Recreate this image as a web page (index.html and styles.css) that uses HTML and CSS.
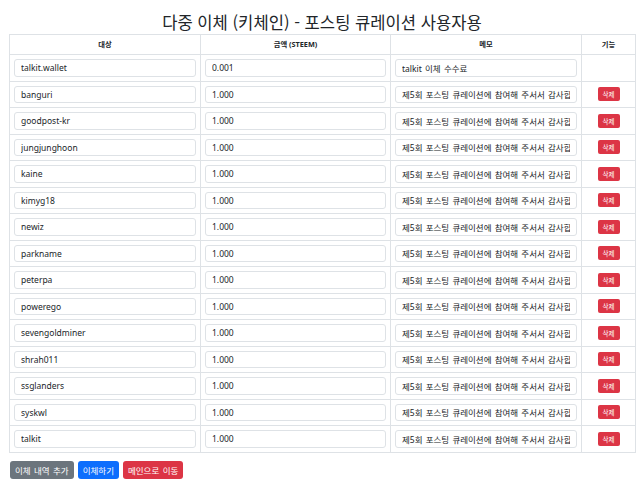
FILE: index.html
```html
<!DOCTYPE html>
<html lang="ko">
<head>
<meta charset="utf-8">
<title>다중 이체 (키체인) - 포스팅 큐레이션 사용자용</title>
<link rel="stylesheet" href="styles.css">
</head>
<body>
<div class="page">
  <h1 class="title">다중 이체 (키체인) - 포스팅 큐레이션 사용자용</h1>
  <table class="transfers">
    <colgroup>
      <col class="c-target"><col class="c-amount"><col class="c-memo"><col class="c-action">
    </colgroup>
    <thead>
      <tr><th>대상</th><th>금액 (STEEM)</th><th>메모</th><th>기능</th></tr>
    </thead>
    <tbody>
      <tr><td><input class="field" value="talkit.wallet"></td><td><input class="field" value="0.001"></td><td><input class="field" value="talkit 이체 수수료"></td><td></td></tr>
      <tr><td><input class="field" value="banguri"></td><td><input class="field" value="1.000"></td><td><input class="field" value="제5회 포스팅 큐레이션에 참여해 주서서 감사합니다"></td><td><button class="del">삭제</button></td></tr>
      <tr><td><input class="field" value="goodpost-kr"></td><td><input class="field" value="1.000"></td><td><input class="field" value="제5회 포스팅 큐레이션에 참여해 주서서 감사합니다"></td><td><button class="del">삭제</button></td></tr>
      <tr><td><input class="field" value="jungjunghoon"></td><td><input class="field" value="1.000"></td><td><input class="field" value="제5회 포스팅 큐레이션에 참여해 주서서 감사합니다"></td><td><button class="del">삭제</button></td></tr>
      <tr><td><input class="field" value="kaine"></td><td><input class="field" value="1.000"></td><td><input class="field" value="제5회 포스팅 큐레이션에 참여해 주서서 감사합니다"></td><td><button class="del">삭제</button></td></tr>
      <tr><td><input class="field" value="kimyg18"></td><td><input class="field" value="1.000"></td><td><input class="field" value="제5회 포스팅 큐레이션에 참여해 주서서 감사합니다"></td><td><button class="del">삭제</button></td></tr>
      <tr><td><input class="field" value="newiz"></td><td><input class="field" value="1.000"></td><td><input class="field" value="제5회 포스팅 큐레이션에 참여해 주서서 감사합니다"></td><td><button class="del">삭제</button></td></tr>
      <tr><td><input class="field" value="parkname"></td><td><input class="field" value="1.000"></td><td><input class="field" value="제5회 포스팅 큐레이션에 참여해 주서서 감사합니다"></td><td><button class="del">삭제</button></td></tr>
      <tr><td><input class="field" value="peterpa"></td><td><input class="field" value="1.000"></td><td><input class="field" value="제5회 포스팅 큐레이션에 참여해 주서서 감사합니다"></td><td><button class="del">삭제</button></td></tr>
      <tr><td><input class="field" value="powerego"></td><td><input class="field" value="1.000"></td><td><input class="field" value="제5회 포스팅 큐레이션에 참여해 주서서 감사합니다"></td><td><button class="del">삭제</button></td></tr>
      <tr><td><input class="field" value="sevengoldminer"></td><td><input class="field" value="1.000"></td><td><input class="field" value="제5회 포스팅 큐레이션에 참여해 주서서 감사합니다"></td><td><button class="del">삭제</button></td></tr>
      <tr><td><input class="field" value="shrah011"></td><td><input class="field" value="1.000"></td><td><input class="field" value="제5회 포스팅 큐레이션에 참여해 주서서 감사합니다"></td><td><button class="del">삭제</button></td></tr>
      <tr><td><input class="field" value="ssglanders"></td><td><input class="field" value="1.000"></td><td><input class="field" value="제5회 포스팅 큐레이션에 참여해 주서서 감사합니다"></td><td><button class="del">삭제</button></td></tr>
      <tr><td><input class="field" value="syskwl"></td><td><input class="field" value="1.000"></td><td><input class="field" value="제5회 포스팅 큐레이션에 참여해 주서서 감사합니다"></td><td><button class="del">삭제</button></td></tr>
      <tr><td><input class="field" value="talkit"></td><td><input class="field" value="1.000"></td><td><input class="field" value="제5회 포스팅 큐레이션에 참여해 주서서 감사합니다"></td><td><button class="del">삭제</button></td></tr>
    </tbody>
  </table>
  <div class="actions">
    <button class="btn btn-gray">이체 내역 추가</button>
    <button class="btn btn-blue">이체하기</button>
    <button class="btn btn-red">메인으로 이동</button>
  </div>
</div>
</body>
</html>
```

FILE: styles.css
```css
html, body {
  margin: 0;
  padding: 0;
  background: #fff;
}
body {
  font-family: "Noto Sans", "Noto Sans CJK KR", sans-serif;
  color: #212529;
}
.page {
  padding: 12px 5px 0 9px;
}
.title {
  margin: 0 0 2px;
  font-family: "Noto Sans CJK KR", sans-serif;
  font-weight: 400;
  font-size: 16.6px;
  line-height: 20px;
  text-align: center;
  color: #212529;
}
.transfers {
  width: 626px;
  table-layout: fixed;
  border-collapse: collapse;
}
.c-target { width: 191px; }
.c-amount { width: 190px; }
.c-memo { width: 191px; }
.c-action { width: 54px; }
.transfers th,
.transfers td {
  border: 1px solid #dee2e6;
  padding: 4px;
  vertical-align: middle;
  text-align: center;
}
.transfers th {
  font-family: "Noto Sans", "Noto Sans CJK KR", sans-serif;
  font-size: 7.3px;
  font-weight: 700;
  line-height: 11px;
}
.transfers td {
  height: 17.5px;
  font-size: 7px;
  line-height: 0;
}
.field {
  display: block;
  box-sizing: border-box;
  width: 100%;
  height: 17.5px;
  margin: 0;
  padding: 0 6px;
  border: 1px solid #dee2e6;
  border-radius: 3px;
  font-family: "Noto Sans", "Noto Sans CJK KR", sans-serif;
  font-size: 8.5px;
  word-spacing: 1px;
  color: #212529;
  background: #fff;
}
.del {
  display: inline-block;
  height: 14px;
  width: 22px;
  padding: 0;
  border: 0;
  border-radius: 2px;
  background: #dc3545;
  color: #fff;
  font-family: "Noto Sans CJK KR", sans-serif;
  font-size: 6.5px;
  line-height: 14px;
  vertical-align: middle;
}
.actions {
  display: flex;
  gap: 4px;
  margin-top: 8px;
  padding-left: 1px;
}
.btn {
  height: 18px;
  padding: 0 5px;
  border: 0;
  border-radius: 3px;
  color: #fff;
  font-family: "Noto Sans CJK KR", sans-serif;
  font-size: 8.5px;
  line-height: 18px;
  word-spacing: 1px;
}
.btn-gray { background: #6c757d; }
.btn-blue { background: #0d6efd; }
.btn-red { background: #dc3545; }
```
